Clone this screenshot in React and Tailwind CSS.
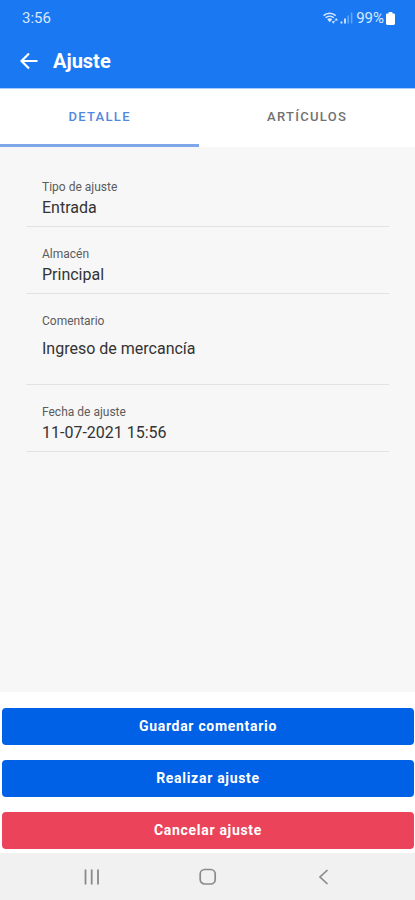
import { useState } from "react";

const fieldBox = "flex flex-col gap-px border-b border-[#e2e2e2] px-4 pt-[19px] pb-[6px]";
const labelText = "text-xs leading-4 text-[#5c5c5c]";
const valueText = "block w-full bg-transparent text-base leading-6 text-[#333] outline-none";
const actionButton =
  "h-[37px] w-full rounded-[4px] pb-[2px] text-sm font-bold tracking-wider text-white";

function StatusBar() {
  return (
    <div className="flex h-9 items-center justify-between pr-5 pl-[22px] text-[#d7e8ff]">
      <span className="text-[15px] leading-5">3:56</span>
      <div className="flex items-center">
        <svg className="mr-[3px] h-[14px] w-[30px]" viewBox="0 0 30 14" fill="none" aria-hidden="true">
          <path d="M0.600 4.600C4 1.400 9.200 1.400 12.600 4.600" stroke="currentColor" strokeWidth="1.500" />
          <path d="M2.600 6.800C5 4.600 8.400 4.600 10.800 6.800" stroke="currentColor" strokeWidth="1.500" />
          <path d="M4.200 8.300C5.600 7 7.800 7 9.200 8.300L6.700 11.200Z" fill="currentColor" />
          <path d="M8.600 10.200h3.600l-1.800 2.600zM11.400 9.400h3.600l-1.800-2.400z" fill="currentColor" />
          <path d="M18.500 12.500v-2M22 12.500v-5" stroke="currentColor" strokeWidth="1.800" />
          <path d="M25.200 12.500v-8M28.600 12.500v-11" stroke="currentColor" strokeWidth="1.600" opacity="0.4" />
        </svg>
        <span className="text-[15px] leading-5">99%</span>
        <svg className="ml-[2px] h-[13px] w-[9px] text-white" viewBox="0 0 9 13" fill="currentColor" aria-hidden="true">
          <path d="M2.600 0h3.800v1.600h1.200c.8 0 1.400.5 1.400 1.300v8.700c0 .8-.6 1.400-1.400 1.400H1.400C.6 13 0 12.400 0 11.600V2.900c0-.8.6-1.300 1.400-1.300h1.200z" />
        </svg>
      </div>
    </div>
  );
}

function Tab({ label, active, onClick }) {
  return (
    <button
      type="button"
      role="tab"
      aria-selected={active}
      onClick={onClick}
      className={
        active
          ? "basis-[48%] border-b-[3px] border-[#7ea6e8] text-[13px] font-medium tracking-widest text-[#5088e4]"
          : "flex-1 border-b-[3px] border-transparent text-[13px] font-medium tracking-widest text-[#717171]"
      }
    >
      {label}
    </button>
  );
}

function Field({ id, label, value }) {
  return (
    <div className={fieldBox}>
      <label htmlFor={id} className={labelText}>{label}</label>
      <input id={id} type="text" defaultValue={value} className={valueText} />
    </div>
  );
}

export default function App() {
  const [tab, setTab] = useState("detalle");

  return (
    <div className="flex min-h-screen flex-col bg-white font-[Roboto,sans-serif]">
      <header className="bg-[#1a78f2]">
        <StatusBar />
        <div className="flex h-[52px] items-center gap-[15px] pr-5 pb-[2px] pl-5">
          <button type="button" aria-label="Volver" className="text-white">
            <svg className="h-[18px] w-[18px]" viewBox="0 0 18 18" fill="none" stroke="currentColor" strokeWidth="2.200" aria-hidden="true">
              <path d="M17.500 9H2M9 1.500L1.500 9L9 16.500" />
            </svg>
          </button>
          <h1 className="text-xl leading-6 font-bold text-white">Ajuste</h1>
        </div>
      </header>

      <div role="tablist" className="flex h-[59px] border-t border-[#a9cbfa]">
        <Tab label="DETALLE" active={tab === "detalle"} onClick={() => setTab("detalle")} />
        <Tab label="ARTÍCULOS" active={tab === "articulos"} onClick={() => setTab("articulos")} />
      </div>

      <main className="flex-1 bg-[#f7f7f7] px-[26px] pt-[13px]">
        <Field id="tipo" label="Tipo de ajuste" value="Entrada" />
        <Field id="almacen" label="Almacén" value="Principal" />
        <div className={fieldBox}>
          <label htmlFor="comentario" className={labelText}>Comentario</label>
          <textarea
            id="comentario"
            rows={1}
            defaultValue="Ingreso de mercancía"
            className="block h-12 w-full resize-none bg-transparent pt-[7px] text-base leading-6 text-[#333] outline-none"
          />
        </div>
        <Field id="fecha" label="Fecha de ajuste" value="11-07-2021 15:56" />
      </main>

      <footer className="flex flex-col gap-[15px] pt-4 pr-px pb-1 pl-[2px]">
        <button type="button" className={`${actionButton} bg-[#0060e6]`}>Guardar comentario</button>
        <button type="button" className={`${actionButton} bg-[#0060e6]`}>Realizar ajuste</button>
        <button type="button" className={`${actionButton} bg-[#eb445a]`}>Cancelar ajuste</button>
      </footer>

      <nav className="flex h-[47px] items-center justify-center gap-[98px] bg-[#f1f1f1] text-[#8a8a8a]">
        <button type="button" aria-label="Recientes">
          <svg className="h-[18px] w-[18px]" viewBox="0 0 18 18" stroke="currentColor" strokeWidth="1.800" aria-hidden="true">
            <path d="M2.500 1.500v15M8.700 1.500v15M15 1.500v15" />
          </svg>
        </button>
        <button type="button" aria-label="Inicio">
          <svg className="h-[18px] w-[18px]" viewBox="0 0 18 18" fill="none" stroke="currentColor" strokeWidth="1.700" aria-hidden="true">
            <rect x="1.200" y="1.500" width="15" height="14.500" rx="4.500" />
          </svg>
        </button>
        <button type="button" aria-label="Atrás">
          <svg className="h-[18px] w-[18px]" viewBox="0 0 18 18" fill="none" stroke="currentColor" strokeWidth="1.700" aria-hidden="true">
            <path d="M12.500 2L5 9L12.500 16" />
          </svg>
        </button>
      </nav>
    </div>
  );
}
